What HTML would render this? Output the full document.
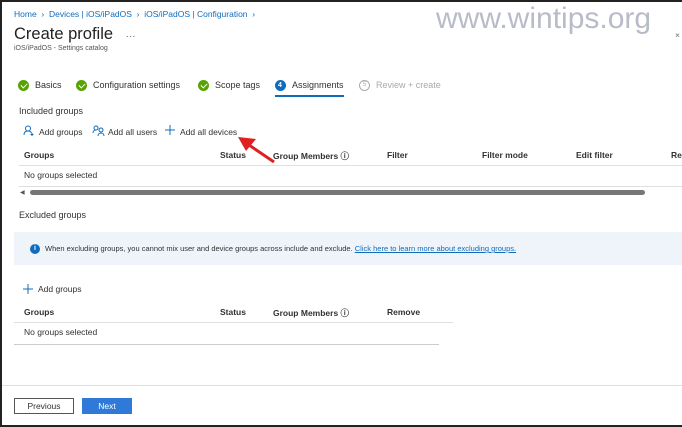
<!DOCTYPE html><html><head><style>
*{margin:0;padding:0;box-sizing:border-box}
body{width:682px;height:427px;overflow:hidden;background:#fff;font-family:"Liberation Sans",sans-serif;font-size:8.5px;color:#323130;position:relative}
#f{position:absolute;left:0;top:0;width:682px;height:427px;border:2px solid #222;border-right:none;pointer-events:none}
.a{position:absolute;white-space:nowrap}
.b{color:#0f6cbd}
.h{font-weight:bold;color:#323130}
.line{position:absolute;height:1px;background:#e1dfdd}
.chk{display:inline-block;width:11px;height:11px;border-radius:50%;background:#57a300;vertical-align:middle;position:relative;margin-right:6px}
.chk.ok:after{content:"";position:absolute;left:3.5px;top:2px;width:3px;height:5px;border:solid #fff;border-width:0 1.5px 1.5px 0;transform:rotate(45deg)}
</style></head><body>
<div class="a b" style="left:14px;top:9px;font-size:8.5px">Home &nbsp;›&nbsp; Devices | iOS/iPadOS &nbsp;›&nbsp; iOS/iPadOS | Configuration &nbsp;›</div>
<div class="a" style="left:14px;top:25px;font-size:16.5px;color:#222">Create profile <span style="font-size:10px;color:#666;margin-left:8px">···</span></div>
<div class="a" style="left:14px;top:45px;font-size:7px;color:#555">iOS/iPadOS - Settings catalog</div>
<div class="a" style="left:436px;top:2px;font-size:30px;color:#b8bcc8">www.wintips.org</div>
<div class="a" style="left:675px;top:30px;color:#666">×</div>
<div class="a" style="left:18px;top:80px;font-size:9px"><span class="chk ok"></span>Basics</div>
<div class="a" style="left:76px;top:80px;font-size:9px"><span class="chk ok"></span>Configuration settings</div>
<div class="a" style="left:198px;top:80px;font-size:9px"><span class="chk ok"></span>Scope tags</div>
<div class="a" style="left:275px;top:80px;font-size:9px"><span class="chk" style="background:#0f6cbd"></span>Assignments</div>
<div class="a" style="left:278px;top:81.5px;font-size:7px;color:#fff;font-weight:bold">4</div>
<div class="a" style="left:275px;top:95px;width:69px;height:2px;background:#0f6cbd"></div>
<div class="a" style="left:359px;top:80px;font-size:9px;color:#aaa"><span style="display:inline-block;width:11px;height:11px;border:1px solid #aaa;border-radius:50%;font-size:6px;text-align:center;line-height:9px;margin-right:6px;vertical-align:middle">5</span>Review + create</div>
<div class="a" style="left:19px;top:106px;font-size:9px">Included groups</div>
<svg class="a" style="left:23px;top:125px" width="12" height="11"><circle cx="5" cy="3.5" r="2.5" fill="none" stroke="#0f6cbd"/><path d="M1 10c0-3 2-4 4-4s3 .8 3.5 2M9 8v3M7.5 9.5h3" fill="none" stroke="#0f6cbd"/></svg>
<div class="a" style="left:39px;top:127px">Add groups</div>
<svg class="a" style="left:92px;top:125px" width="13" height="11"><circle cx="4" cy="3" r="2" fill="none" stroke="#0f6cbd"/><circle cx="9" cy="5" r="2" fill="none" stroke="#0f6cbd"/><path d="M1 8c0-2 1.5-3 3-3M6 11c0-2 1.5-3 3-3s3 1 3 3" fill="none" stroke="#0f6cbd"/></svg>
<div class="a" style="left:108px;top:127px">Add all users</div>
<svg class="a" style="left:165px;top:125px" width="10" height="10"><path d="M5 0v10M0 5h10" stroke="#0f6cbd"/></svg>
<div class="a" style="left:180px;top:127px">Add all devices</div>
<div class="a h" style="left:24px;top:150px">Groups</div>
<div class="a h" style="left:220px;top:150px">Status</div>
<div class="a h" style="left:273px;top:150px">Group Members ⓘ</div>
<div class="a h" style="left:387px;top:150px">Filter</div>
<div class="a h" style="left:482px;top:150px">Filter mode</div>
<div class="a h" style="left:576px;top:150px">Edit filter</div>
<div class="a h" style="left:671px;top:150px">Re</div>
<div class="line" style="left:19px;top:165px;width:663px"></div>
<div class="a" style="left:24px;top:170px">No groups selected</div>
<div class="line" style="left:19px;top:186px;width:663px"></div>
<div class="a" style="left:20px;top:189px;color:#555;font-size:6px">◀</div>
<div class="a" style="left:30px;top:190px;width:615px;height:5px;border-radius:3px;background:#777"></div>
<div class="a" style="left:19px;top:210px;font-size:9px">Excluded groups</div>
<div class="a" style="left:14px;top:232px;width:668px;height:33px;background:#eff4fa"></div>
<div class="a" style="left:30px;top:244px;width:10px;height:10px;border-radius:50%;background:#0f6cbd;color:#fff;font-size:7px;text-align:center;line-height:10px;font-weight:bold">i</div>
<div class="a" style="left:45px;top:244px;font-size:7.5px">When excluding groups, you cannot mix user and device groups across include and exclude. <span style="color:#0f6cbd;text-decoration:underline">Click here to learn more about excluding groups.</span></div>
<svg class="a" style="left:23px;top:284px" width="10" height="10"><path d="M5 0v10M0 5h10" stroke="#0f6cbd"/></svg>
<div class="a" style="left:38px;top:284px">Add groups</div>
<div class="a h" style="left:24px;top:307px">Groups</div>
<div class="a h" style="left:220px;top:307px">Status</div>
<div class="a h" style="left:273px;top:307px">Group Members ⓘ</div>
<div class="a h" style="left:387px;top:307px">Remove</div>
<div class="line" style="left:14px;top:322px;width:439px"></div>
<div class="a" style="left:24px;top:327px">No groups selected</div>
<div class="line" style="left:14px;top:344px;width:425px;background:#ccc"></div>
<div class="line" style="left:2px;top:385px;width:680px"></div>
<div class="a" style="left:14px;top:398px;width:60px;height:16px;border:1px solid #555;text-align:center;line-height:14px">Previous</div>
<div class="a" style="left:82px;top:398px;width:50px;height:16px;background:#2f7ad9;color:#fff;text-align:center;line-height:16px">Next</div>
<svg class="a" style="left:232px;top:133px" width="50" height="32"><line x1="42" y1="29" x2="14" y2="10" stroke="#e02020" stroke-width="3"/><polygon points="6,4 24,6 14,18" fill="#e02020"/></svg>
<div id="f"></div>
</body></html>
